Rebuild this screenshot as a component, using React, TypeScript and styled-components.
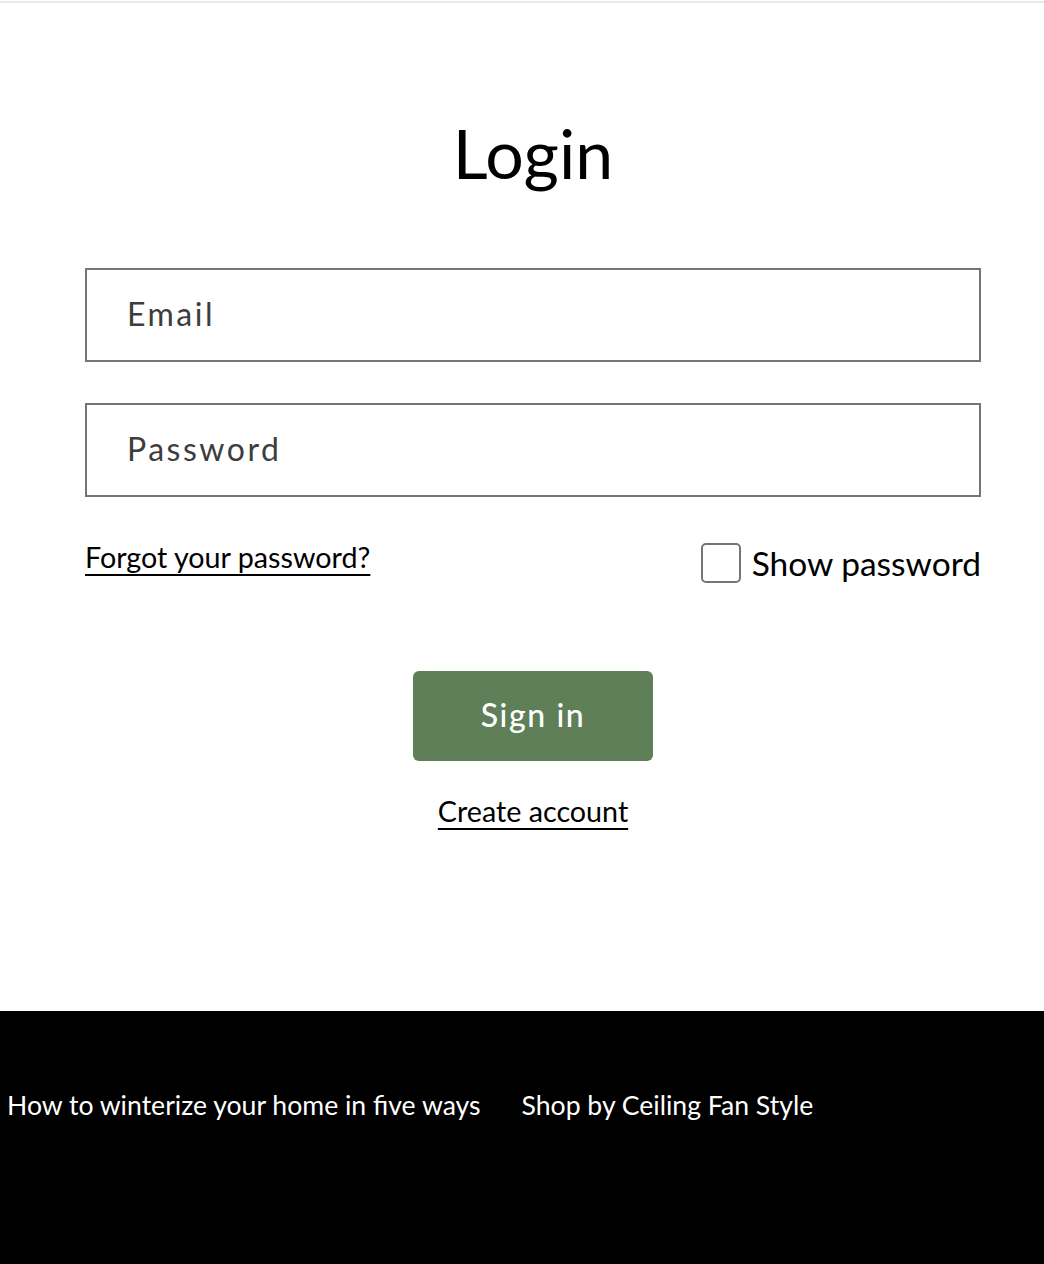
import React from "react";
import styled, { createGlobalStyle } from "styled-components";

const Global = createGlobalStyle`
  html, body { margin: 0; padding: 0; background: #fff; }
  body { font-family: Lato, "Open Sans", sans-serif; color: #000; }
  * { box-sizing: border-box; }
`;

const Page = styled.div`
  display: flex;
  flex-direction: column;
  min-height: 1264px;
`;

const HeaderRule = styled.div`
  margin-top: 1px;
  height: 2px;
  background: #e8e8e8;
`;

const Main = styled.main`
  display: flex;
  flex-direction: column;
  align-items: center;
  padding: 105px 0 0 22px;
  height: 1008px;
`;

const Form = styled.form`
  width: 896px;
  display: flex;
  flex-direction: column;
  align-items: stretch;
`;

const Title = styled.h1`
  margin: 0 0 70px;
  text-align: center;
  font-weight: 400;
  font-size: 68px;
  line-height: 90px;
`;

const Field = styled.div<{ $mb: number }>`
  height: 94px;
  border: 2px solid #757575;
  display: flex;
  align-items: center;
  padding: 0 40px 3px;
  margin-bottom: ${(p) => p.$mb}px;
`;

const Placeholder = styled.span`
  font-size: 32px;
  letter-spacing: 2.5px;
  color: #3d3d3d;
`;

const Row = styled.div`
  display: flex;
  justify-content: space-between;
  align-items: flex-start;
  height: 134px;
`;

const LinkText = styled.a`
  font-size: 28.7px;
  color: #000;
  text-decoration: underline;
  text-decoration-thickness: 2px;
  text-underline-offset: 6px;
  line-height: 40px;
`;

const ShowPw = styled.label`
  display: flex;
  align-items: center;
  gap: 11px;
  font-size: 33.5px;
  margin-top: 6px;
`;

const Box = styled.span`
  width: 40px;
  height: 40px;
  border: 2px solid #757575;
  border-radius: 5px;
  display: inline-block;
`;

const Actions = styled.div`
  display: flex;
  flex-direction: column;
  align-items: center;
  gap: 30px;
`;

const Button = styled.button`
  width: 240px;
  height: 90px;
  border: none;
  border-radius: 6px;
  background: #5e7f57;
  color: #fff;
  font-family: inherit;
  font-size: 32px;
  letter-spacing: 1.6px;
  font-weight: 500;
  padding: 0 0 4px;
`;

const Footer = styled.footer`
  background: #000;
  height: 253px;
  padding: 74px 0 0 7px;
  display: flex;
  gap: 41px;
`;

const FooterLink = styled.a`
  color: #fff;
  font-size: 26.6px;
  line-height: 40px;
  text-decoration: none;
`;

export default function App() {
  return (
    <Page>
      <Global />
      <HeaderRule />
      <Main>
        <Form>
          <Title>Login</Title>
          <Field $mb={41}>
            <Placeholder>Email</Placeholder>
          </Field>
          <Field $mb={40}>
            <Placeholder>Password</Placeholder>
          </Field>
          <Row>
            <LinkText href="#">Forgot your password?</LinkText>
            <ShowPw>
              <Box />
              Show password
            </ShowPw>
          </Row>
          <Actions>
            <Button type="button">Sign in</Button>
            <LinkText href="#">Create account</LinkText>
          </Actions>
        </Form>
      </Main>
      <Footer>
        <FooterLink href="#">How to winterize your home in five ways</FooterLink>
        <FooterLink href="#">Shop by Ceiling Fan Style</FooterLink>
      </Footer>
    </Page>
  );
}
